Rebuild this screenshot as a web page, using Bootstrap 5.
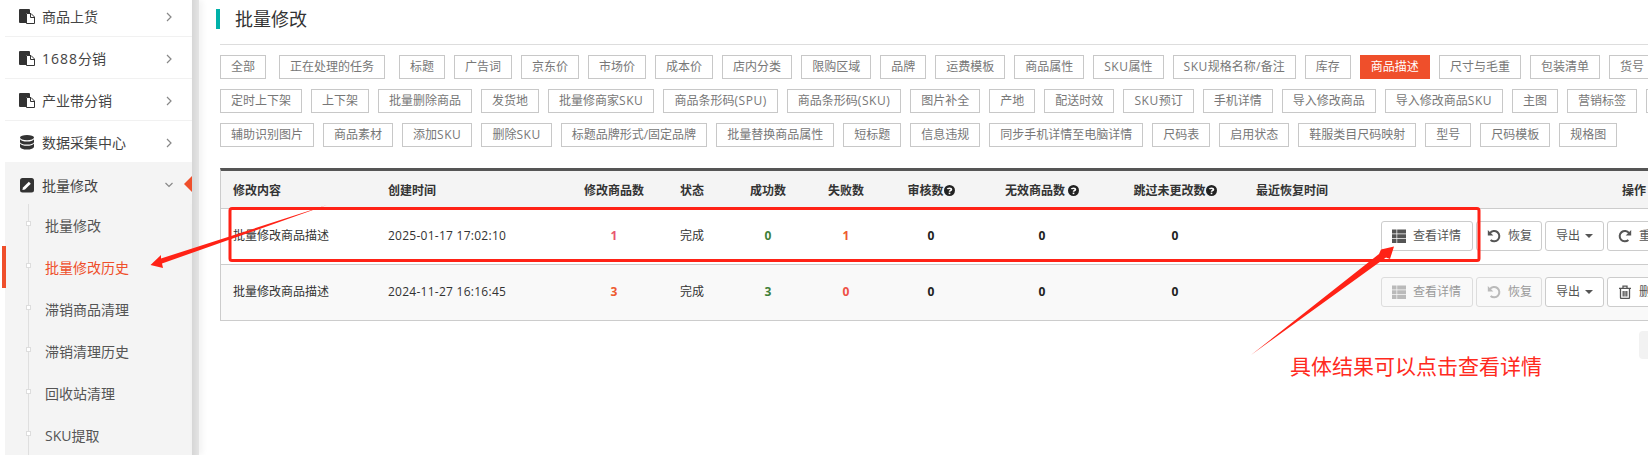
<!DOCTYPE html>
<html lang="zh-CN">
<head>
<meta charset="utf-8">
<title>批量修改</title>
<link rel="stylesheet" href="https://cdn.jsdelivr.net/npm/bootstrap@5.3.0/dist/css/bootstrap.min.css">
<style>
html,body{height:455px;overflow:hidden;background:#fff}
body{position:relative;font-family:"Open Sans","Noto Sans CJK SC",sans-serif;font-size:12px;color:#333}
.page-wrap{height:455px;width:1648px}
.side-pane{width:192px;flex:none;padding-left:5px;background:#fff;height:455px;overflow:hidden}
.side-strip{width:7px;flex:none;background:linear-gradient(90deg,#d6d6d6,#e4e4e4);height:455px;box-shadow:3px 0 6px rgba(0,0,0,.06)}
.side-list{margin-top:-5px}
.side-item{height:42px;padding:2px 20px 0 14px;font-size:14px;color:#444;border-bottom:1px solid #f1f1f1;position:relative}
.side-item svg.mi{width:16px;height:15px;margin-right:7px;flex:none}
.side-item .chev{width:8px;height:10px;margin-left:auto;margin-right:-1px}
.side-item.open{background:#f4f4f4;border-bottom:0;margin-top:-1px;padding-top:4px}
.side-marker{position:absolute;right:0;top:14px;width:0;height:0;border-style:solid;border-width:8px 8px 8px 0;border-color:transparent #ef4f2b transparent transparent}
.sub-wrap{background:#f4f4f4;padding-left:23px}
.sub-list{border-left:1px solid #dfdfdf}
.sub-item{height:42px;padding-left:16px;font-size:14px;color:#555;position:relative}
.sub-item::before{content:"";position:absolute;left:-3px;top:17px;width:5px;height:5px;background:#fff;border:1px solid #ddd}
.sub-item.current{color:#ef4f2b}
.sub-item.current::after{content:"";position:absolute;left:-27px;top:0;width:4px;height:42px;background:#ef4f2b}
.main-pane{flex:1;min-width:0;padding-left:21px;overflow:hidden}
.page-title{height:20px;margin:9px 0 0 -4px;border-left:4px solid #00b1a9;padding-left:15px;font-size:18px;line-height:20px;color:#333;font-weight:400}
.title-rule{height:1px;background:#ddd;margin:15px 0 10px}
.tag-row{gap:9px;margin-bottom:10px;width:1700px}
.tag-btn{height:24px;padding:0 10px;border:1px solid #c8c8c8;background:#fff;color:#777;font-size:12px;line-height:22px;white-space:nowrap;flex:none;border-radius:0}
.tag-btn.picked{background:#ef4f2b;border-color:#ef4f2b;color:#fff}
.tag-btn.wide-gap{margin:0 5px 0 4px}
.tag-btn.blank-tag{width:60px}
.lat{letter-spacing:.55px}
.lat-big{letter-spacing:1px}
.stamp{letter-spacing:.26px}
.hist-wrap{margin-top:21px;width:1690px;border-top:3px solid #555;border-left:1px solid #ccc}
.hist-table{table-layout:fixed;width:1675px;margin:0;font-size:12px;--bs-table-border-color:#ccc;--bs-table-color:#333}
.hist-table th,.hist-table td{padding:0 12px;vertical-align:middle;border-bottom:1px solid #ccc;white-space:nowrap}
.hist-table th{height:37px;padding-top:3px;background:#f4f4f4;font-weight:600;--bs-table-bg:#f4f4f4;box-shadow:none}
.hist-table td{height:56px}
.row-plain td{--bs-table-bg:#fff;background:#fff}
.row-soft td{--bs-table-bg:#f9f9f9;background:#f9f9f9}
.num{font-weight:700}
.n-pink{color:#e8546f}.n-orange{color:#ee5a30}.n-green{color:#3f7f3a}.n-red{color:#ee5046}.n-dark{color:#222}
.q-icon{width:11px;height:11px;vertical-align:-1px}
.hist-table td.ops{padding-left:9px}
.op-row{gap:3px}
.op-btn{height:30px;padding:0 10px;border:1px solid #ccc;border-radius:3px;background:#fff;color:#555;font-size:12px;flex:none;white-space:nowrap;--bs-btn-padding-x:10px}
.op-btn svg{width:14px;height:14px;flex:none;margin-right:7px}
.op-btn.dim{color:#999;border-color:#ddd;background:#f9f9f9}
.op-btn.dim svg{opacity:.65}
.op-btn.dropdown-toggle::after{margin-left:5px;vertical-align:.15em;border-top-width:4px;border-left-width:4px;border-right-width:4px}
.op-view{width:92px}.op-undo{width:66px}.op-out{width:59px}
.overlay-art{position:absolute;left:0;top:0;width:1648px;height:455px;pointer-events:none}
.note-text{position:absolute;left:1290px;top:350px;font-size:21px;line-height:30px;color:#ff2a1e;font-family:"Noto Sans CJK SC",sans-serif;white-space:nowrap}
.edge-tab{position:absolute;left:1639px;top:331px;width:9px;height:28px;background:#f2f2f2;border-radius:4px 0 0 4px}
</style>
</head>
<body>
<svg width="0" height="0" class="position-absolute">
  <symbol id="i-files" viewBox="0 0 16 15"><path fill="#333" d="M1 0h9a1 1 0 0 1 1 1v3H7v10H1a1 1 0 0 1-1-1V1a1 1 0 0 1 1-1z"/><path fill="#fff" stroke="#333" d="M7.5 4.5h4.5l3.500 3.500v6.500h-8z"/><path fill="none" stroke="#333" d="M11.500 4.500v4h4"/></symbol>
  <symbol id="i-db" viewBox="0 0 16 15"><g fill="#333"><ellipse cx="8" cy="2.600" rx="7" ry="2.600"/><path d="M1 4.200c1 1.600 3.800 2.300 7 2.300s6-.7 7-2.300V7c0 1.400-3 2.600-7 2.600S1 8.400 1 7z"/><path d="M1 8.400c1 1.600 3.800 2.300 7 2.300s6-.7 7-2.300v3c0 1.900-3 3.100-7 3.100s-7-1.200-7-3.100z"/></g></symbol>
  <symbol id="i-edit" viewBox="0 0 16 15"><rect x="1" y="0" width="14" height="14.500" rx="2.500" fill="#333"/><path fill="#fff" d="M4 9.500 9.800 3.700l2 2L6 11.500l-2.600.6z"/></symbol>
  <symbol id="i-list" viewBox="0 0 14 14"><path fill="currentColor" d="M0 .5h4.500v4H0zM5.200 .5H14v4H5.200zM0 5.200h4.500v4H0zM5.200 5.200H14v4H5.200zM0 9.900h4.500v4H0zM5.200 9.900H14v4H5.200z"/></symbol>
  <symbol id="i-undo" viewBox="0 0 14 14"><path fill="none" stroke="currentColor" stroke-width="2" d="M3 4a5.200 5.200 0 1 1 .6 7"/><path fill="currentColor" d="M.8 1v5.500h5.500z"/></symbol>
  <symbol id="i-redo" viewBox="0 0 14 14"><path fill="none" stroke="currentColor" stroke-width="2" d="M11 4a5.200 5.200 0 1 0-.6 7"/><path fill="currentColor" d="M13.200 1v5.500H7.700z"/></symbol>
  <symbol id="i-trash" viewBox="0 0 14 14"><path fill="none" stroke="currentColor" stroke-width="1.300" d="M2.500 4v8.500a1 1 0 0 0 1 1h7a1 1 0 0 0 1-1V4M1 3.300h12M5 3V1.200h4V3M5.200 6v5.500M7 6v5.500M8.800 6v5.500"/></symbol>
  <symbol id="i-q" viewBox="0 0 12 12"><circle cx="6" cy="6" r="6" fill="#222"/><path fill="none" stroke="#fff" stroke-width="1.700" d="M3.800 4.600C4 3.200 8.200 3 8.200 4.800c0 1.300-2.200 1.200-2.200 2.600"/><rect x="5.100" y="8.300" width="1.800" height="1.700" fill="#fff"/></symbol>
  <symbol id="i-right" viewBox="0 0 8 10"><path fill="none" stroke="#888" stroke-width="1.200" d="M2 1l4 4-4 4"/></symbol>
  <symbol id="i-down" viewBox="0 0 8 10"><path fill="none" stroke="#888" stroke-width="1.200" d="M.5 3l3.500 3.500L7.500 3"/></symbol>
</svg>

<div class="page-wrap d-flex">
  <aside class="side-pane">
    <div class="side-list">
      <div class="side-item d-flex align-items-center"><svg class="mi"><use href="#i-files"/></svg>商品上货<svg class="chev"><use href="#i-right"/></svg></div>
      <div class="side-item d-flex align-items-center"><svg class="mi"><use href="#i-files"/></svg><span><span class="lat-big">1688</span>分销</span><svg class="chev"><use href="#i-right"/></svg></div>
      <div class="side-item d-flex align-items-center"><svg class="mi"><use href="#i-files"/></svg>产业带分销<svg class="chev"><use href="#i-right"/></svg></div>
      <div class="side-item d-flex align-items-center"><svg class="mi"><use href="#i-db"/></svg>数据采集中心<svg class="chev"><use href="#i-right"/></svg></div>
      <div class="side-item open d-flex align-items-center"><svg class="mi"><use href="#i-edit"/></svg>批量修改<svg class="chev"><use href="#i-down"/></svg><span class="side-marker"></span></div>
      <div class="sub-wrap">
        <div class="sub-list">
          <div class="sub-item d-flex align-items-center">批量修改</div>
          <div class="sub-item current d-flex align-items-center">批量修改历史</div>
          <div class="sub-item d-flex align-items-center">滞销商品清理</div>
          <div class="sub-item d-flex align-items-center">滞销清理历史</div>
          <div class="sub-item d-flex align-items-center">回收站清理</div>
          <div class="sub-item d-flex align-items-center">SKU提取</div>
        </div>
      </div>
    </div>
  </aside>
  <div class="side-strip"></div>
  <main class="main-pane">
    <h1 class="page-title">批量修改</h1>
    <div class="title-rule"></div>
    <div class="tag-row d-flex">
      <span class="tag-btn">全部</span><span class="tag-btn wide-gap">正在处理的任务</span><span class="tag-btn">标题</span><span class="tag-btn">广告词</span><span class="tag-btn">京东价</span><span class="tag-btn">市场价</span><span class="tag-btn">成本价</span><span class="tag-btn">店内分类</span><span class="tag-btn">限购区域</span><span class="tag-btn">品牌</span><span class="tag-btn">运费模板</span><span class="tag-btn">商品属性</span><span class="tag-btn"><span class="lat">SKU</span>属性</span><span class="tag-btn"><span class="lat">SKU</span>规格名称<span class="lat">/</span>备注</span><span class="tag-btn">库存</span><span class="tag-btn picked">商品描述</span><span class="tag-btn">尺寸与毛重</span><span class="tag-btn">包装清单</span><span class="tag-btn">货号</span>
    </div>
    <div class="tag-row d-flex">
      <span class="tag-btn">定时上下架</span><span class="tag-btn">上下架</span><span class="tag-btn">批量删除商品</span><span class="tag-btn">发货地</span><span class="tag-btn">批量修商家<span class="lat">SKU</span></span><span class="tag-btn">商品条形码<span class="lat">(SPU)</span></span><span class="tag-btn">商品条形码<span class="lat">(SKU)</span></span><span class="tag-btn">图片补全</span><span class="tag-btn">产地</span><span class="tag-btn">配送时效</span><span class="tag-btn"><span class="lat">SKU</span>预订</span><span class="tag-btn">手机详情</span><span class="tag-btn">导入修改商品</span><span class="tag-btn">导入修改商品<span class="lat">SKU</span></span><span class="tag-btn">主图</span><span class="tag-btn">营销标签</span><span class="tag-btn blank-tag"></span>
    </div>
    <div class="tag-row d-flex">
      <span class="tag-btn">辅助识别图片</span><span class="tag-btn">商品素材</span><span class="tag-btn">添加<span class="lat">SKU</span></span><span class="tag-btn">删除<span class="lat">SKU</span></span><span class="tag-btn">标题品牌形式/固定品牌</span><span class="tag-btn">批量替换商品属性</span><span class="tag-btn">短标题</span><span class="tag-btn">信息违规</span><span class="tag-btn">同步手机详情至电脑详情</span><span class="tag-btn">尺码表</span><span class="tag-btn">启用状态</span><span class="tag-btn">鞋服类目尺码映射</span><span class="tag-btn">型号</span><span class="tag-btn">尺码模板</span><span class="tag-btn">规格图</span>
    </div>
    <div class="hist-wrap">
      <table class="table hist-table">
        <colgroup><col style="width:155px"><col style="width:184px"><col style="width:108px"><col style="width:60px"><col style="width:80px"><col style="width:76px"><col style="width:94px"><col style="width:128px"><col style="width:138px"><col style="width:128px"><col style="width:524px"></colgroup>
        <thead>
          <tr>
            <th>修改内容</th><th>创建时间</th><th class="text-center">修改商品数</th><th>状态</th><th class="text-center">成功数</th><th class="text-center">失败数</th>
            <th class="text-center">审核数<svg class="q-icon"><use href="#i-q"/></svg></th>
            <th class="text-center">无效商品数 <svg class="q-icon"><use href="#i-q"/></svg></th>
            <th class="text-center">跳过未更改数<svg class="q-icon"><use href="#i-q"/></svg></th>
            <th>最近恢复时间</th><th class="text-center">操作</th>
          </tr>
        </thead>
        <tbody>
          <tr class="row-plain">
            <td>批量修改商品描述</td><td class="stamp">2025-01-17 17:02:10</td><td class="text-center num n-pink">1</td><td>完成</td><td class="text-center num n-green">0</td><td class="text-center num n-orange">1</td><td class="text-center num n-dark">0</td><td class="text-center num n-dark">0</td><td class="text-center num n-dark">0</td><td></td>
            <td class="ops"><div class="op-row d-flex">
              <button class="btn op-btn op-view d-flex align-items-center"><svg><use href="#i-list"/></svg>查看详情</button>
              <button class="btn op-btn op-undo d-flex align-items-center"><svg><use href="#i-undo"/></svg>恢复</button>
              <button class="btn op-btn op-out dropdown-toggle">导出</button>
              <button class="btn op-btn d-flex align-items-center"><svg><use href="#i-redo"/></svg>重新修改</button>
            </div></td>
          </tr>
          <tr class="row-soft">
            <td>批量修改商品描述</td><td class="stamp">2024-11-27 16:16:45</td><td class="text-center num n-orange">3</td><td>完成</td><td class="text-center num n-green">3</td><td class="text-center num n-red">0</td><td class="text-center num n-dark">0</td><td class="text-center num n-dark">0</td><td class="text-center num n-dark">0</td><td></td>
            <td class="ops"><div class="op-row d-flex">
              <button class="btn op-btn dim op-view d-flex align-items-center"><svg><use href="#i-list"/></svg>查看详情</button>
              <button class="btn op-btn dim op-undo d-flex align-items-center"><svg><use href="#i-undo"/></svg>恢复</button>
              <button class="btn op-btn op-out dropdown-toggle">导出</button>
              <button class="btn op-btn d-flex align-items-center"><svg><use href="#i-trash"/></svg>删除</button>
            </div></td>
          </tr>
        </tbody>
      </table>
    </div>
  </main>
</div>

<div class="edge-tab"></div>
<svg class="overlay-art" viewBox="0 0 1648 455">
  <rect x="230" y="208.500" width="1249" height="52" rx="2" fill="none" stroke="#ff2216" stroke-width="3"/>
  <polygon fill="#ff2216" points="327,205 161,258.500 161,255 150.500,265 163,268 162,263.500"/>
  <polygon fill="#ff2216" points="1251,355 1379,254 1381,249.500 1394,246.500 1390,259 1386,257.500"/>
</svg>
<div class="note-text">具体结果可以点击查看详情</div>
<script src="https://cdn.jsdelivr.net/npm/bootstrap@5.3.0/dist/js/bootstrap.bundle.min.js"></script>
</body>
</html>
